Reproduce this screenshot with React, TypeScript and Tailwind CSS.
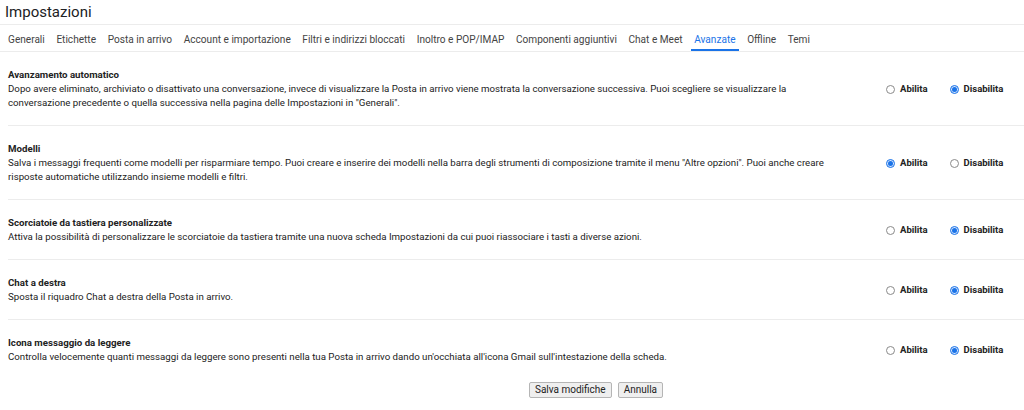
const TABS = [
  "Generali",
  "Etichette",
  "Posta in arrivo",
  "Account e importazione",
  "Filtri e indirizzi bloccati",
  "Inoltro e POP/IMAP",
  "Componenti aggiuntivi",
  "Chat e Meet",
  "Avanzate",
  "Offline",
  "Temi",
];

const SECTIONS = [
  {
    title: "Avanzamento automatico",
    text: [
      "Dopo avere eliminato, archiviato o disattivato una conversazione, invece di visualizzare la Posta in arrivo viene mostrata la conversazione successiva. Puoi scegliere se visualizzare la",
      "conversazione precedente o quella successiva nella pagina delle Impostazioni in \"Generali\".",
    ],
    on: false,
  },
  {
    title: "Modelli",
    text: [
      "Salva i messaggi frequenti come modelli per risparmiare tempo. Puoi creare e inserire dei modelli nella barra degli strumenti di composizione tramite il menu \"Altre opzioni\". Puoi anche creare",
      "risposte automatiche utilizzando insieme modelli e filtri.",
    ],
    on: true,
  },
  {
    title: "Scorciatoie da tastiera personalizzate",
    text: [
      "Attiva la possibilità di personalizzare le scorciatoie da tastiera tramite una nuova scheda Impostazioni da cui puoi riassociare i tasti a diverse azioni.",
    ],
    on: false,
  },
  {
    title: "Chat a destra",
    text: ["Sposta il riquadro Chat a destra della Posta in arrivo."],
    on: false,
  },
  {
    title: "Icona messaggio da leggere",
    text: [
      "Controlla velocemente quanti messaggi da leggere sono presenti nella tua Posta in arrivo dando un'occhiata all'icona Gmail sull'intestazione della scheda.",
    ],
    on: false,
  },
];

function Radio({ checked, label }: { checked: boolean; label: string }) {
  return (
    <div className="flex items-center gap-[5px]">
      {checked ? (
        <span className="flex h-[9px] w-[9px] items-center justify-center rounded-full border border-[#1a73e8] bg-[#d2e3fc]">
          <span className="h-[5px] w-[5px] rounded-full bg-[#1a73e8]" />
        </span>
      ) : (
        <span className="h-[9px] w-[9px] rounded-full border border-[#8a8a8a] bg-white" />
      )}
      <span className="text-[9.5px] leading-[12px] font-bold text-[#222]">{label}</span>
    </div>
  );
}

export default function App() {
  return (
    <div className="h-[410px] w-[1024px] overflow-hidden bg-white font-['Roboto',sans-serif] text-[#222]">
      {/* header */}
      <div className="flex h-[25px] items-center border-b border-[#ececec] pl-[5px] pt-[1px] text-[15px] leading-none text-[#202124]">
        Impostazioni
      </div>

      {/* tabs */}
      <div className="flex h-[27px] items-stretch gap-[11.6px] border-b border-[#ececec] pl-2">
        {TABS.map((t) => {
          const active = t === "Avanzate";
          return (
            <div
              key={t}
              className={`flex items-center border-b-2 pt-[5px] text-[10.1px] ${
                active ? "-mx-[3px] border-[#1a73e8] px-[3px] text-[#1a73e8]" : "border-transparent text-[#444]"
              }`}
            >
              {t}
            </div>
          );
        })}
      </div>

      {/* sections */}
      {SECTIONS.map((s, i) => (
        <div
          key={s.title}
          className={`ml-2 flex items-center pt-4 pb-[15px] ${i < SECTIONS.length - 1 ? "border-b border-[#ececec]" : ""}`}
        >
          <div className="flex-1 text-[9.7px] leading-[14px]">
            <div className="h-[14px] font-bold">{s.title}</div>
            {s.text.map((l) => (
              <div key={l} className="h-[14px]">
                {l}
              </div>
            ))}
          </div>
          <div className="flex w-[138px] items-center gap-[22px]">
            <Radio checked={s.on} label="Abilita" />
            <Radio checked={!s.on} label="Disabilita" />
          </div>
        </div>
      ))}

      {/* buttons */}
      <div className="mt-[3px] flex justify-center gap-[6px] pl-[168px]">
        <button className="h-[16px] rounded-[2px] border border-[#b5b5b5] bg-[#efefef] px-[5px] text-[10px] leading-none text-[#222]">
          Salva modifiche
        </button>
        <button className="h-[16px] rounded-[2px] border border-[#b5b5b5] bg-[#efefef] px-[5px] text-[10px] leading-none text-[#222]">
          Annulla
        </button>
      </div>
    </div>
  );
}
